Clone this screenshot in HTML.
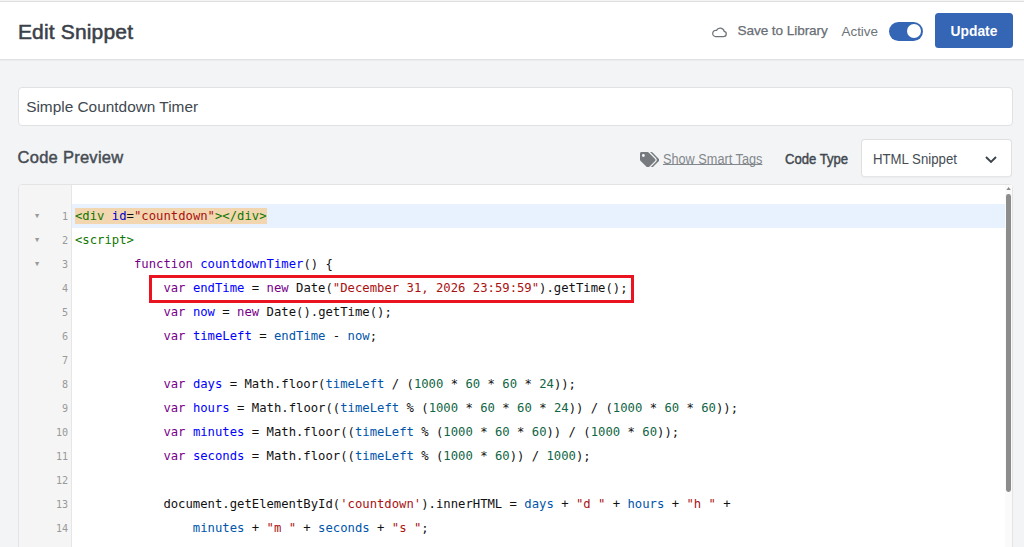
<!DOCTYPE html>
<html><head><meta charset="utf-8">
<style>
*{box-sizing:border-box;margin:0;padding:0}
html,body{width:1024px;height:547px;overflow:hidden;background:#f3f4f5;font-family:"Liberation Sans",sans-serif;color:#3c434a}
.topline{position:absolute;left:0;top:1px;width:1024px;height:1px;background:#dedede}
.header{position:absolute;left:0;top:2px;width:1024px;height:58px;background:#fff;border-bottom:1px solid #e2e3e4;box-shadow:0 1px 0 #ebeced}
.title{position:absolute;left:17.9px;top:18px;font-size:21px;font-weight:normal;-webkit-text-stroke:0.55px #3a4149;color:#3a4149;letter-spacing:0.17px}
.save{position:absolute;left:737.5px;top:21px;font-size:13.6px;color:#696e74;-webkit-text-stroke:0.25px #696e74;letter-spacing:-0.08px}
.active{position:absolute;left:841.5px;top:22px;font-size:13.4px;color:#6c737a}
.toggle{position:absolute;left:889px;top:19.5px;width:34px;height:19.5px;border-radius:10px;background:#3565b5}
.toggle i{position:absolute;right:2.3px;top:2.6px;width:14.2px;height:14.2px;border-radius:8px;background:#fff}
.btn{position:absolute;left:935px;top:11px;width:78px;height:35px;border-radius:3.5px;background:#3565b5;color:#fff;font-weight:bold;font-size:13.8px;text-align:center;line-height:38.6px}
.name{position:absolute;left:17.5px;top:87px;width:995px;height:39px;background:#fff;border:1px solid #e0e1e3;border-radius:4px;font-size:15.4px;line-height:37.4px;padding-left:7.7px;color:#41484f}
.cp{position:absolute;left:17.5px;top:148px;font-size:16.5px;color:#454c54;-webkit-text-stroke:0.45px #454c54;letter-spacing:0.27px}
.smart{position:absolute;left:663.2px;top:151px;font-size:14px;color:#82878c;text-decoration:underline;text-decoration-thickness:1.2px;text-underline-offset:0.3px;text-decoration-skip-ink:none;transform-origin:0 50%;transform:scaleX(.908);white-space:nowrap}
.ctype{position:absolute;left:784.5px;top:151px;font-size:14px;color:#41484f;-webkit-text-stroke:0.45px #41484f;transform-origin:0 50%;transform:scaleX(.935);white-space:nowrap}
.sel{position:absolute;left:861px;top:139px;width:151px;height:38px;background:#fff;border:1px solid #dfe0e2;border-bottom-color:#e6e7e8;border-radius:4px;box-shadow:0 1px 0 #ebeced;font-size:14px;line-height:39.4px;padding-left:10.5px;color:#454c53}
.sel span{display:inline-block;transform-origin:0 50%;transform:scaleX(.943);white-space:nowrap}
.editor{position:absolute;left:17.5px;top:184px;width:995px;height:370px;background:#fff;border:1px solid #e3e4e6;border-radius:4px 4px 0 0;overflow:hidden}
.gutter{position:absolute;left:0;top:0;width:53.5px;height:370px;background:#f5f5f5;border-right:1px solid #e6e6e6}
.hl{position:absolute;left:53.5px;top:19px;width:933px;height:23.8px;background:#e8f2ff}
.code{position:absolute;left:0;top:19px;width:990px;font-family:"DejaVu Sans Mono","Liberation Mono",monospace;font-size:12.245px;line-height:24px;white-space:pre;color:#111}
.ln{position:absolute;left:0;margin-top:1px;width:49.7px;text-align:right;color:#999;font-size:10.1px;font-family:"DejaVu Sans Mono","Liberation Mono",monospace;line-height:24px}
.fold{position:absolute;left:16.5px;margin-top:-0.3px;width:8px;font-size:7px;color:#999;line-height:24px}
.l{position:absolute;left:56.5px;height:24px;margin-top:0}
.k{color:#708}.d{color:#00f}.v{color:#05a}.s{color:#a11}.n{color:#164}.t{color:#170}.a{color:#00c}
.m{}
.mb{position:absolute;left:56.2px;top:4.2px;width:192px;height:15.6px;background:#f1d6b0}
.red{position:absolute;left:149px;top:275px;width:485px;height:28px;border:3px solid #ea1320}
.sb{position:absolute;left:1006.4px;top:193.8px;width:4.4px;height:298px;border-radius:2.4px;background:#8c8c8c}
.sbt{position:absolute;left:1005px;top:185px;width:6.5px;height:370px;background:#fafafa}
</style></head><body>
<div class="topline"></div>
<div class="header">
<div class="title">Edit Snippet</div>
<svg style="position:absolute;left:711.2px;top:23.6px" width="17" height="12" viewBox="0 0 17 12"><path d="M4.2 10.5h8.6a2.55 2.55 0 0 0 .4-5.05a4.1 4.1 0 0 0-7.7-1.1A3.1 3.1 0 0 0 4.2 10.5z" fill="none" stroke="#6e7378" stroke-width="1.25"/></svg>
<div class="save">Save to Library</div>
<div class="active">Active</div>
<div class="toggle"><i></i></div>
<div class="btn">Update</div>
</div>
<div class="name">Simple Countdown Timer</div>
<div class="cp">Code Preview</div>
<svg style="position:absolute;left:639.9px;top:151.9px" width="19.4" height="15.6" viewBox="0 0 640 512"><path fill="#777b80" d="M497.941 225.941L286.059 14.059A48 48 0 0 0 252.118 0H48C21.49 0 0 21.49 0 48v204.118a48 48 0 0 0 14.059 33.941l211.882 211.882c18.744 18.745 49.136 18.746 67.882 0l204.118-204.118c18.745-18.745 18.745-49.137 0-67.882zM112 160c-26.51 0-48-21.49-48-48s21.49-48 48-48 48 21.49 48 48-21.49 48-48 48zm513.941 133.823L421.823 497.941c-18.745 18.745-49.137 18.745-67.882 0l-.36-.36L527.64 323.522c16.999-16.999 26.36-39.6 26.36-63.64s-9.362-46.641-26.36-63.64L331.397 0h48.721a48 48 0 0 1 33.941 14.059l211.882 211.882c18.745 18.745 18.745 49.137 0 67.882z"/></svg>
<div class="smart">Show Smart Tags</div>
<div class="ctype">Code Type</div>
<div class="sel"><span>HTML Snippet</span><svg style="position:absolute;left:123px;top:15.5px" width="12" height="8" viewBox="0 0 12 8"><path d="M1 1l5 5 5-5" fill="none" stroke="#3c434a" stroke-width="1.9"/></svg></div>
<div class="editor">
<div class="gutter"></div>
<div class="hl"></div>
<div class="code"><div class="mb"></div>
<span class="fold" style="top:0">▼</span><span class="fold" style="top:24px">▼</span><span class="fold" style="top:48px">▼</span>
<span class="ln" style="top:0">1</span><span class="l" style="top:0"><span class="m"><span class="t">&lt;div</span> <span class="a">id</span>=<span class="s">"countdown"</span><span class="t">&gt;&lt;/div&gt;</span></span></span>
<span class="ln" style="top:24px">2</span><span class="l" style="top:24px"><span class="t">&lt;script&gt;</span></span>
<span class="ln" style="top:48px">3</span><span class="l" style="top:48px">        <span class="k">function</span> <span class="d">countdownTimer</span>() {</span>
<span class="ln" style="top:72px">4</span><span class="l" style="top:72px">            <span class="k">var</span> <span class="d">endTime</span> = <span class="k">new</span> Date(<span class="s">"December 31, 2026 23:59:59"</span>).getTime();</span>
<span class="ln" style="top:96px">5</span><span class="l" style="top:96px">            <span class="k">var</span> <span class="d">now</span> = <span class="k">new</span> Date().getTime();</span>
<span class="ln" style="top:120px">6</span><span class="l" style="top:120px">            <span class="k">var</span> <span class="d">timeLeft</span> = <span class="v">endTime</span> - <span class="v">now</span>;</span>
<span class="ln" style="top:144px">7</span>
<span class="ln" style="top:168px">8</span><span class="l" style="top:168px">            <span class="k">var</span> <span class="d">days</span> = Math.floor(<span class="v">timeLeft</span> / (<span class="n">1000</span> * <span class="n">60</span> * <span class="n">60</span> * <span class="n">24</span>));</span>
<span class="ln" style="top:192px">9</span><span class="l" style="top:192px">            <span class="k">var</span> <span class="d">hours</span> = Math.floor((<span class="v">timeLeft</span> % (<span class="n">1000</span> * <span class="n">60</span> * <span class="n">60</span> * <span class="n">24</span>)) / (<span class="n">1000</span> * <span class="n">60</span> * <span class="n">60</span>));</span>
<span class="ln" style="top:216px">10</span><span class="l" style="top:216px">            <span class="k">var</span> <span class="d">minutes</span> = Math.floor((<span class="v">timeLeft</span> % (<span class="n">1000</span> * <span class="n">60</span> * <span class="n">60</span>)) / (<span class="n">1000</span> * <span class="n">60</span>));</span>
<span class="ln" style="top:240px">11</span><span class="l" style="top:240px">            <span class="k">var</span> <span class="d">seconds</span> = Math.floor((<span class="v">timeLeft</span> % (<span class="n">1000</span> * <span class="n">60</span>)) / <span class="n">1000</span>);</span>
<span class="ln" style="top:264px">12</span>
<span class="ln" style="top:288px">13</span><span class="l" style="top:288px">            document.getElementById(<span class="s">'countdown'</span>).innerHTML = <span class="v">days</span> + <span class="s">"d "</span> + <span class="v">hours</span> + <span class="s">"h "</span> +</span>
<span class="ln" style="top:312px">14</span><span class="l" style="top:312px">                <span class="v">minutes</span> + <span class="s">"m "</span> + <span class="v">seconds</span> + <span class="s">"s "</span>;</span>
</div>
</div>
<div class="sbt"></div>
<svg style="position:absolute;left:1005.9px;top:186.9px" width="5.2" height="3" viewBox="0 0 6 4"><path d="M0 4l3-4 3 4z" fill="#8a8a8a"/></svg>
<div class="sb"></div>
<div class="red"></div>
</body></html>
